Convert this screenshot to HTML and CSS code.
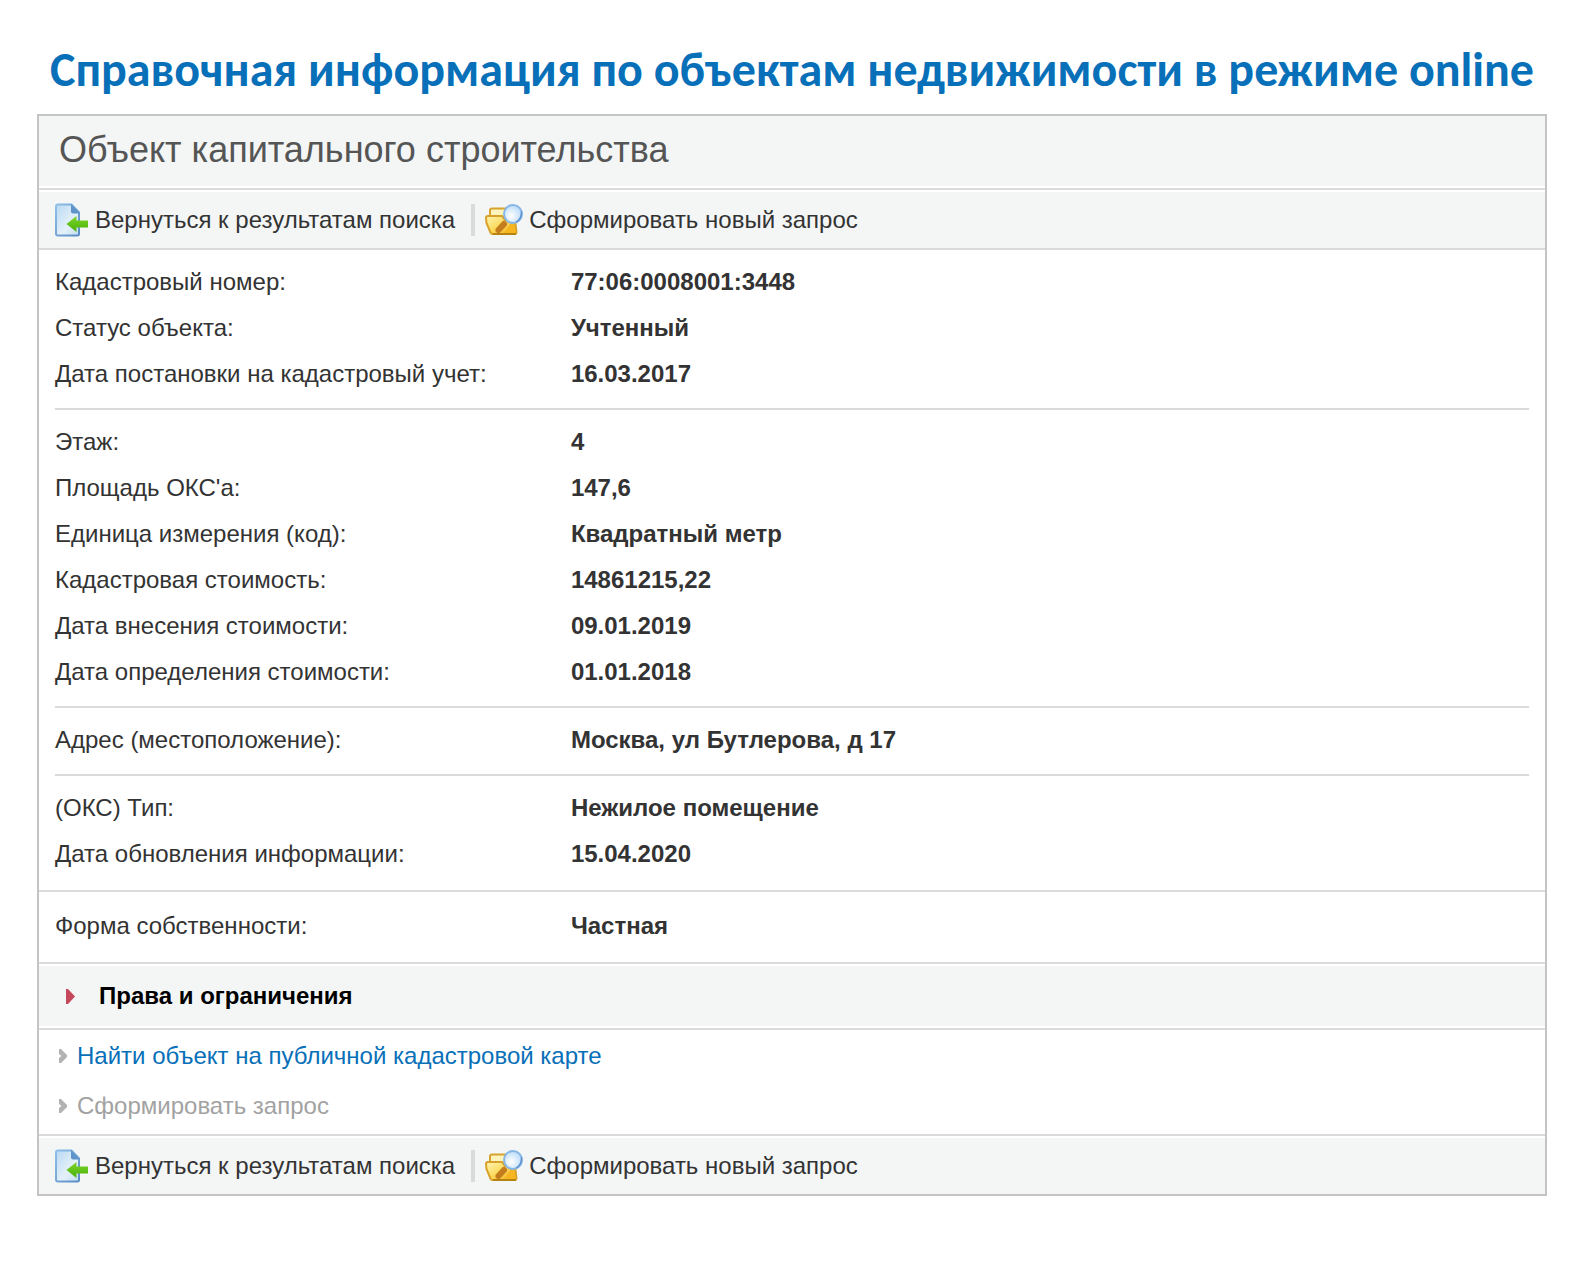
FILE: index.html
```html
<!DOCTYPE html>
<html lang="ru">
<head>
<meta charset="utf-8">
<meta name="viewport" content="width=device-width, initial-scale=1">
<title>Справочная информация по объектам недвижимости</title>
<link rel="stylesheet" href="styles.css">
</head>
<body>
<svg class="sprite" aria-hidden="true">
  <defs>
    <linearGradient id="paper" x1="0" y1="0" x2="1" y2="1"><stop offset="0" stop-color="#b9d8f2"/><stop offset=".6" stop-color="#e4f1fa"/><stop offset="1" stop-color="#c2dcf2"/></linearGradient>
    <linearGradient id="edge" x1="0" y1="0" x2="1" y2="1"><stop offset="0" stop-color="#8fbfe8"/><stop offset="1" stop-color="#5a8cc4"/></linearGradient>
    <linearGradient id="leaf" x1="0" y1="0" x2="0" y2="1"><stop offset="0" stop-color="#7ed52a"/><stop offset="1" stop-color="#47b008"/></linearGradient>
    <linearGradient id="gold" x1="0" y1="0" x2="1" y2="1"><stop offset="0" stop-color="#fff6b4"/><stop offset=".5" stop-color="#fbd95a"/><stop offset="1" stop-color="#f0a818"/></linearGradient>
    <radialGradient id="lens" cx=".4" cy=".6" r=".6"><stop offset="0" stop-color="#ffffff"/><stop offset="1" stop-color="#bddcf8"/></radialGradient>
  </defs>
  <symbol id="icon-back" viewBox="1 0 34 34">
    <path d="M2 3.500Q2 1.500 4 1.500H17.500L25 9.500V31Q25 32.500 23 32.500H4Q2 32.500 2 30.500Z" fill="url(#paper)" stroke="url(#edge)" stroke-width="2"/>
    <path d="M17 1L26 10.500H19Q17 10.500 17 8.500Z" fill="#5f94ca"/>
    <path d="M12.500 21L22.500 13V17.500H34V24.500H22.500V29Z" fill="url(#leaf)"/>
  </symbol>
  <symbol id="icon-search" viewBox="0 0 38 34">
    <path d="M5 14V7.500Q5 5.500 7 5.500H20V14Z" fill="#fdf3bd" stroke="#d8a32c" stroke-width="2"/>
    <path d="M1 15Q1 13 3 13H17L20 17H30L31.500 29Q31.500 31 29.500 31H7.500Q6 31 5.500 29.500L1.500 20Z" fill="url(#gold)" stroke="#d8a12a" stroke-width="2"/>
    <path d="M8 31H31" stroke="#b5830f" stroke-width="2"/>
    <path d="M19 30L26 20H29L31 30Z" fill="#f7b520"/>
    <path d="M13.500 27L19 21" stroke="#c47d1c" stroke-width="6" stroke-linecap="round"/>
    <circle cx="28" cy="11" r="9" fill="url(#lens)" stroke="#87b7e6" stroke-width="2"/>
    <path d="M31 19Q37 16 36.500 8" fill="none" stroke="#6196d2" stroke-width="1.500"/>
  </symbol>
  <symbol id="icon-chevron" viewBox="0 0 8 14"><path d="M0 0H2L8 6V8L2 14H0V9L2.500 7L0 5Z" fill="#b2b2b2"/></symbol>
  <symbol id="icon-triangle" viewBox="0 0 9 15"><path d="M0 0H2L9 7.500L2 15H0Z" fill="#c4485a"/></symbol>
</svg>

<main class="page">
  <h1 class="page-title">Справочная информация по объектам недвижимости в режиме online</h1>

  <section class="panel">
    <header class="panel-header"><h2 class="panel-title">Объект капитального строительства</h2></header>

    <nav class="toolbar toolbar-top">
      <a class="tool" href="#results"><svg class="icon-back" aria-hidden="true"><use href="#icon-back"/></svg>Вернуться к результатам поиска</a>
      <span class="separator"></span>
      <a class="tool" href="#query"><svg class="icon-search" aria-hidden="true"><use href="#icon-search"/></svg>Сформировать новый запрос</a>
    </nav>

    <div class="details">
      <dl class="group">
        <div class="row"><dt>Кадастровый номер:</dt><dd>77:06:0008001:3448</dd></div>
        <div class="row"><dt>Статус объекта:</dt><dd>Учтенный</dd></div>
        <div class="row"><dt>Дата постановки на кадастровый учет:</dt><dd>16.03.2017</dd></div>
      </dl>
      <dl class="group">
        <div class="row"><dt>Этаж:</dt><dd>4</dd></div>
        <div class="row"><dt>Площадь ОКС'а:</dt><dd>147,6</dd></div>
        <div class="row"><dt>Единица измерения (код):</dt><dd>Квадратный метр</dd></div>
        <div class="row"><dt>Кадастровая стоимость:</dt><dd>14861215,22</dd></div>
        <div class="row"><dt>Дата внесения стоимости:</dt><dd>09.01.2019</dd></div>
        <div class="row"><dt>Дата определения стоимости:</dt><dd>01.01.2018</dd></div>
      </dl>
      <dl class="group">
        <div class="row"><dt>Адрес (местоположение):</dt><dd>Москва, ул Бутлерова, д 17</dd></div>
      </dl>
      <dl class="group">
        <div class="row"><dt>(ОКС) Тип:</dt><dd>Нежилое помещение</dd></div>
        <div class="row"><dt>Дата обновления информации:</dt><dd>15.04.2020</dd></div>
      </dl>
    </div>

    <dl class="ownership">
      <div class="row"><dt>Форма собственности:</dt><dd>Частная</dd></div>
    </dl>

    <button class="rights" type="button" aria-expanded="false"><svg class="icon-triangle" aria-hidden="true"><use href="#icon-triangle"/></svg>Права и ограничения</button>

    <ul class="actions">
      <li><svg class="icon-chevron" aria-hidden="true"><use href="#icon-chevron"/></svg><a class="action" href="#map">Найти объект на публичной кадастровой карте</a></li>
      <li><svg class="icon-chevron" aria-hidden="true"><use href="#icon-chevron"/></svg><button class="action" type="button" disabled>Сформировать запрос</button></li>
    </ul>

    <nav class="toolbar toolbar-bottom">
      <a class="tool" href="#results"><svg class="icon-back" aria-hidden="true"><use href="#icon-back"/></svg>Вернуться к результатам поиска</a>
      <span class="separator"></span>
      <a class="tool" href="#query"><svg class="icon-search" aria-hidden="true"><use href="#icon-search"/></svg>Сформировать новый запрос</a>
    </nav>
  </section>
</main>
</body>
</html>
```
FILE: styles.css
```css
* {
  box-sizing: border-box;
}

body {
  margin: 0;
  background: #fff;
  color: #333;
  font: 24px/46px "Liberation Sans", Arial, sans-serif;
}

h1, h2, dl, dd, ul {
  margin: 0;
  padding: 0;
}

.sprite {
  position: absolute;
  width: 0;
  height: 0;
}

.page {
  padding: 40px 37px 68px;
}

.page-title {
  padding-bottom: 14px;
  color: #0870b8;
  font: 700 48px/60px Carlito, Lato, sans-serif;
  text-align: center;
}

.panel {
  border: 2px solid #c4c4c4;
}

.panel-header {
  padding: 10px 20px 12px;
  border-bottom: 2px solid #fff;
  background: #f4f6f6;
}

.panel-title {
  color: #555;
  font-size: 36px;
  font-weight: 400;
  line-height: 48px;
}

/* Grey bands carry a white hairline beside the dividing rule */
.toolbar {
  display: flex;
  align-items: center;
  padding: 7px 16px 5px;
  border-top: 2px solid #dadada;
  background: #f4f6f6;
  box-shadow: inset 0 2px #fff;
}

.toolbar-top {
  border-bottom: 2px solid #dadada;
}

.tool {
  display: flex;
  align-items: center;
  color: #333;
  text-decoration: none;
}

.icon-back {
  width: 34px;
  height: 34px;
  margin-right: 6px;
}

.icon-search {
  width: 38px;
  height: 34px;
  margin-right: 6px;
}

.separator {
  width: 4px;
  height: 32px;
  margin: 0 10px 0 16px;
  background: #dadada;
}

.details {
  padding: 0 16px 2px;
}

.group {
  padding: 9px 0 11px;
}

.group + .group {
  border-top: 2px solid #dadada;
}

.row {
  display: grid;
  grid-template-columns: 35% 1fr;
}

.row dd {
  font-weight: 700;
}

.ownership {
  padding: 11px 16px 13px;
  border-top: 2px solid #dadada;
}

.rights {
  display: flex;
  align-items: center;
  gap: 24px;
  width: 100%;
  padding: 9px 27px;
  border: solid #dadada;
  border-width: 2px 0;
  background: #f4f6f6;
  box-shadow: inset 0 2px #fff, inset 0 -2px #fff;
  color: #000;
  font: inherit;
  font-weight: 700;
}

.icon-triangle {
  width: 9px;
  height: 15px;
}

.actions {
  padding: 1px 20px 3px;
  line-height: 50px;
  list-style: none;
}

.actions li {
  display: flex;
  align-items: center;
  gap: 10px;
}

.icon-chevron {
  width: 8px;
  height: 14px;
}

.action {
  padding: 0;
  border: 0;
  background: none;
  color: #0870b8;
  font: inherit;
  text-decoration: none;
}

.action:disabled {
  color: #a2a2a2;
}
```
